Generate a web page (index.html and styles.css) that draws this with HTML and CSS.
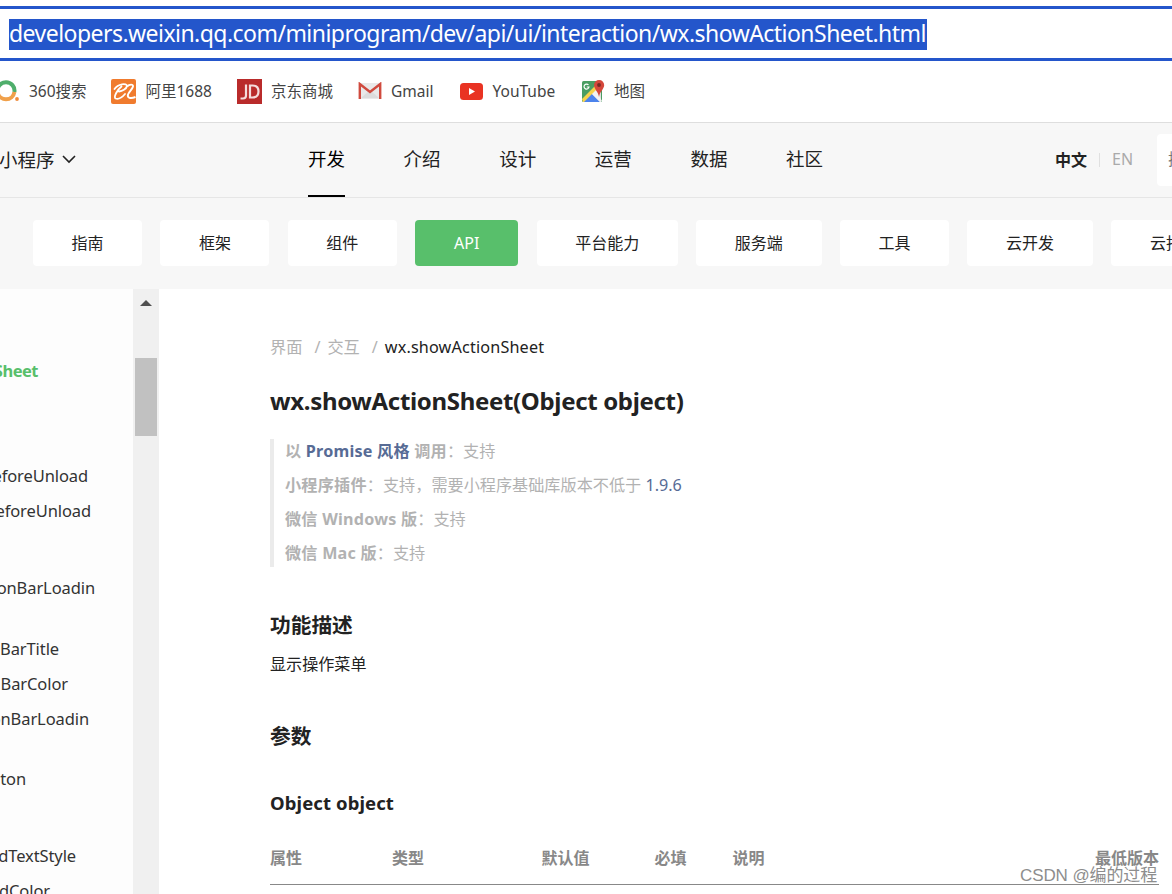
FILE: index.html
```html
<!DOCTYPE html>
<html lang="zh-CN">
<head>
  <meta charset="UTF-8">
  <meta name="viewport" content="width=device-width, initial-scale=1.0">
  <title>wx.showActionSheet(Object object) | 微信开放文档</title>
  <link rel="stylesheet" href="styles.css">
</head>
<body>

  <div class="address-bar">
    <span class="url">developers.weixin.qq.com/miniprogram/dev/api/ui/interaction/wx.showActionSheet.html</span>
  </div>

  <div class="bookmarks">
    <a class="bookmark b-360">
      <svg width="26" height="26" viewBox="0 0 26 26">
        <path d="M3.6 14A8.500 8.500 0 1 1 20.400 14" fill="none" stroke="#4fae6b" stroke-width="4"/>
        <path d="M20.400 14A8.500 8.500 0 0 1 3.600 14" fill="none" stroke="#f0a04a" stroke-width="4"/>
        <circle cx="23" cy="21" r="1.900" fill="#ef8b3c"/>
      </svg>
      <span>360搜索</span>
    </a>
    <a class="bookmark b-1688">
      <svg width="25" height="25" viewBox="0 0 25 25">
        <rect width="25" height="25" rx="2" fill="#f07b2e"/>
        <path d="M3.500 10C7 4.500 16 4 16 7C15.500 10 11 12 8 12.500M10.500 7.500C6 11 2.500 18 4.500 19.500C7.500 20.500 11.500 18 14 15" fill="none" stroke="#fff" stroke-width="1.800" stroke-linecap="round"/>
        <path d="M16 7.500C18.500 5 22.500 5 22 7.500C21.500 10 18 13 17 15.500C16 19 19.500 20 24.500 18" fill="none" stroke="#fff" stroke-width="1.900"/>
      </svg>
      <span>阿里1688</span>
    </a>
    <a class="bookmark b-jd">
      <svg width="25" height="25" viewBox="0 0 25 25">
        <rect width="25" height="25" fill="#b92b2b"/>
        <path d="M9 5.500V16.500Q9 19.500 6 19.500H3.500M13 6.500V18.500H15.500Q21.500 18.500 21.500 12.500Q21.500 6.500 15.500 6.500Z" fill="none" stroke="#f5dcdc" stroke-width="2.200"/>
      </svg>
      <span>京东商城</span>
    </a>
    <a class="bookmark b-gmail">
      <svg width="24" height="18" viewBox="0 0 24 18">
        <rect x="1" y="1" width="22" height="16" fill="#e9e9e9"/>
        <path d="M3 16L12 8L21 16" fill="#dcdcdc"/>
        <path d="M1.800 17V2L12 10L22.200 2V17" fill="none" stroke="#d04a3e" stroke-width="2.400"/>
      </svg>
      <span>Gmail</span>
    </a>
    <a class="bookmark b-youtube">
      <svg width="23" height="17" viewBox="0 0 23 17">
        <rect width="23" height="17" rx="3.500" fill="#e93323"/>
        <path d="M9 5L15 8.500L9 12Z" fill="#fff"/>
      </svg>
      <span>YouTube</span>
    </a>
    <a class="bookmark b-map">
      <svg width="24" height="24" viewBox="0 0 24 24">
        <rect x="1" y="2" width="20" height="21" rx="1.500" fill="#4a9d62"/>
        <path d="M11 13L20 5V23H11Z" fill="#dedede"/>
        <path d="M1 20L14 7L17 10L4 23H2Z" fill="#f6d24b"/>
        <path d="M3 23L11 15L19 23Z" fill="#4c83ec"/>
        <path d="M11 15L15 11L21 22L19 23Z" fill="#f2f2f2"/>
        <path d="M7.500 6A2.500 2.500 0 1 0 8 8H5.800" fill="none" stroke="#fff" stroke-width="1.200"/>
        <path d="M18 18C17.500 13 13 10 13 6A5 5 0 0 1 23.200 6C23.200 10 18.500 13 18 18Z" fill="#d4473b"/>
        <circle cx="18" cy="6" r="1.900" fill="#762a24"/>
      </svg>
      <span>地图</span>
    </a>
  </div>

  <header class="nav">
    <div class="product">
      <span>小程序</span>
      <svg width="14" height="9" viewBox="0 0 14 9"><path d="M1 1L7 7L13 1" fill="none" stroke="#222" stroke-width="1.600"/></svg>
    </div>
    <nav class="menu">
      <a class="active">开发</a>
      <a>介绍</a>
      <a>设计</a>
      <a>运营</a>
      <a>数据</a>
      <a>社区</a>
    </nav>
    <div class="lang">
      <b>中文</b>
      <i class="divider"></i>
      <span>EN</span>
    </div>
    <div class="search">搜</div>
  </header>

  <div class="tabs">
    <a class="tab w2">指南</a>
    <a class="tab w2">框架</a>
    <a class="tab w2">组件</a>
    <a class="tab api">API</a>
    <a class="tab w4">平台能力</a>
    <a class="tab w3">服务端</a>
    <a class="tab w2">工具</a>
    <a class="tab w3">云开发</a>
    <a class="tab w3">云托管</a>
  </div>

  <div class="main">
    <aside class="sidebar">
      <ul>
        <li class="current">Sheet</li>
        <li>eforeUnload</li>
        <li>eforeUnload</li>
        <li>onBarLoadin</li>
        <li>BarTitle</li>
        <li>BarColor</li>
        <li>onBarLoadin</li>
        <li>ton</li>
        <li>dTextStyle</li>
        <li>dColor</li>
      </ul>
    </aside>
    <div class="scrollbar">
      <svg class="arrow" width="12" height="6" viewBox="0 0 12 6"><path d="M0 6L6 0L12 6Z" fill="#505050"/></svg>
      <div class="thumb"></div>
    </div>

    <article class="content">
      <div class="breadcrumb">
        <span>界面</span><i>/</i><span>交互</span><i>/</i><b>wx.showActionSheet</b>
      </div>
      <h1>wx.showActionSheet(Object object)</h1>
      <blockquote>
        <p><strong>以 <a>Promise 风格</a> 调用</strong>：支持</p>
        <p><strong>小程序插件</strong>：支持，需要小程序基础库版本不低于 <a>1.9.6</a></p>
        <p><strong>微信 Windows 版</strong>：支持</p>
        <p><strong>微信 Mac 版</strong>：支持</p>
      </blockquote>
      <h2>功能描述</h2>
      <p class="desc">显示操作菜单</p>
      <h2 class="params">参数</h2>
      <h3>Object object</h3>
      <div class="table-head">
        <span>属性</span>
        <span>类型</span>
        <span>默认值</span>
        <span>必填</span>
        <span>说明</span>
        <span>最低版本</span>
      </div>
    </article>
  </div>

  <div class="watermark">CSDN @编的过程</div>

</body>
</html>
```
FILE: styles.css
```css
* {
  box-sizing: border-box;
}

body {
  margin: 0;
  width: 1172px;
  height: 894px;
  overflow: hidden;
  position: relative;
  background: #fff;
  color: #222;
  font-family: "Noto Sans", "Noto Sans CJK SC", sans-serif;
  font-size: 16px;
}

svg {
  display: block;
  flex: none;
}

/* browser chrome */
.address-bar {
  margin-top: 6px;
  height: 55px;
  border-top: 3px solid #2456cb;
  border-bottom: 3px solid #2456cb;
  padding: 10px 0 0 9px;
}

.url {
  display: block;
  width: 918px;
  height: 31px;
  line-height: 29px;
  background: #2456cb;
  color: #fff;
  font-size: 23px;
  letter-spacing: -0.54px;
  white-space: nowrap;
}

.bookmarks {
  height: 61px;
  display: flex;
  align-items: center;
  color: #444;
  font-size: 15.500px;
}

.bookmark {
  display: flex;
  align-items: center;
  white-space: nowrap;
  height: 30px;
}

.bookmark svg {
  margin-top: -1px;
}

.bookmark span {
  margin-top: -2px;
}

.b-360 {
  width: 117px;
  margin-left: -6px;
  gap: 9px;
}

.b-1688 {
  width: 126px;
  gap: 9.500px;
}

.b-jd {
  width: 121px;
  gap: 9px;
}

.b-gmail {
  width: 102px;
  gap: 9px;
}

.b-youtube {
  width: 121px;
  gap: 9.500px;
}

.b-map {
  gap: 9px;
}

/* site header */
.nav {
  height: 76px;
  background: #f7f7f7;
  border-top: 1px solid #dedede;
  border-bottom: 1px solid #e6e6e6;
  display: flex;
  align-items: center;
  overflow: hidden;
}

.product {
  flex: none;
  width: 309px;
  display: flex;
  align-items: center;
  gap: 7px;
  font-size: 18.500px;
  margin: -2px 0 0 -1px;
}

.menu {
  flex: none;
  display: flex;
  gap: 58.600px;
  width: 748px;
  font-size: 18.500px;
}

.menu a {
  width: 37px;
  height: 74px;
  line-height: 72px;
  white-space: nowrap;
}

.menu .active {
  color: #000;
  border-bottom: 2px solid #000;
}

.lang {
  flex: none;
  width: 102px;
  display: flex;
  align-items: center;
  font-size: 16px;
  color: #aaa;
  margin: -3px 0 0 -1px;
}

.lang b {
  color: #222;
}

.divider {
  width: 1px;
  height: 14px;
  margin: 2px 12px 0;
  background: #e0e0e0;
}

.search {
  width: 60px;
  height: 52px;
  line-height: 51px;
  flex: none;
  padding-left: 11px;
  background: #fff;
  border-radius: 4px;
  color: #777;
}

.tabs {
  height: 91px;
  background: #f7f7f7;
  display: flex;
  gap: 18.400px;
  padding: 22px 0 0 33.100px;
  overflow: hidden;
}

.tab {
  flex: none;
  height: 46px;
  line-height: 46px;
  text-align: center;
  background: #fff;
  border-radius: 4px;
}

.w2 {
  width: 109px;
}

.w3 {
  width: 125.500px;
}

.w4 {
  width: 141px;
}

.api {
  width: 103px;
  background: #58bf6b;
  color: #fff;
}

/* page body */
.main {
  height: 605px;
  display: flex;
}

.sidebar {
  width: 133px;
  background: #fdfdfd;
  overflow: hidden;
}

.sidebar ul {
  list-style: none;
  margin: 0;
  padding: 64px 0 0;
}

.sidebar li {
  display: flex;
  justify-content: flex-end;
  width: 89px;
  height: 35px;
  line-height: 35px;
  font-size: 16.500px;
  letter-spacing: -0.1px;
  color: #333;
}

.sidebar .current {
  width: 38px;
  margin-bottom: 70px;
  color: #58bf6b;
  font-weight: bold;
  letter-spacing: -0.5px;
}

.sidebar li:nth-child(2) {
  width: 88px;
}

.sidebar li:nth-child(3) {
  width: 91px;
  margin-bottom: 42px;
}

.sidebar li:nth-child(4) {
  width: 95px;
  margin-bottom: 26px;
}

.sidebar li:nth-child(5) {
  width: 59px;
}

.sidebar li:nth-child(6) {
  width: 68px;
}

.sidebar li:nth-child(7) {
  margin-bottom: 25px;
}

.sidebar li:nth-child(8) {
  width: 26px;
  margin-bottom: 42px;
}

.sidebar li:nth-child(9) {
  width: 76px;
}

.sidebar li:nth-child(10) {
  width: 50px;
}

.scrollbar {
  width: 26px;
  padding: 11px 2px 0;
  background: #f0f0f0;
}

.arrow {
  margin: 0 auto;
}

.thumb {
  height: 78px;
  margin-top: 52px;
  background: #c1c1c1;
}

.content {
  width: 889px;
  margin-left: 111px;
  padding-top: 41px;
}

.breadcrumb {
  display: flex;
  height: 34px;
  line-height: 34px;
  font-size: 16.200px;
  color: #b2b2b2;
}

.breadcrumb i {
  font-style: normal;
  margin: 0 7px 0 12px;
}

.breadcrumb b {
  color: #222;
  font-weight: normal;
  letter-spacing: 0.16px;
}

h1 {
  margin: 19px 0 0;
  height: 36px;
  line-height: 36px;
  font-size: 24px;
  letter-spacing: -0.33px;
}

blockquote {
  margin: 20px 0 0;
  height: 128px;
  padding-left: 11px;
  border-left: 4px solid #ebebeb;
  color: #b2b2b2;
  font-size: 16.150px;
}

blockquote p {
  margin: 0;
  height: 34px;
  line-height: 24px;
}

blockquote strong {
  letter-spacing: 0.22px;
}

blockquote a {
  color: #576b95;
}

h2 {
  margin: 43px 0 0;
  height: 30px;
  line-height: 30px;
  font-size: 20.700px;
}

.desc {
  margin: 12px 0 0;
  height: 24px;
  line-height: 24px;
  font-size: 16.100px;
}

.params {
  margin-top: 45px;
}

h3 {
  margin: 37px 0 0;
  height: 30px;
  line-height: 30px;
  font-size: 18.500px;
  letter-spacing: 0.1px;
}

.table-head {
  display: grid;
  grid-template-columns: 122px 149.500px 113px 78px 362.500px 64px;
  height: 39px;
  line-height: 24px;
  margin-top: 28px;
  border-bottom: 1px solid #888;
  color: #888;
  font-weight: bold;
  white-space: nowrap;
}

.watermark {
  position: absolute;
  left: 1020px;
  top: 864px;
  line-height: 24px;
  font-family: "Liberation Sans", "Noto Sans CJK SC", sans-serif;
  font-size: 17px;
  letter-spacing: -0.1px;
  color: #8d8d8d;
  white-space: nowrap;
}
```
